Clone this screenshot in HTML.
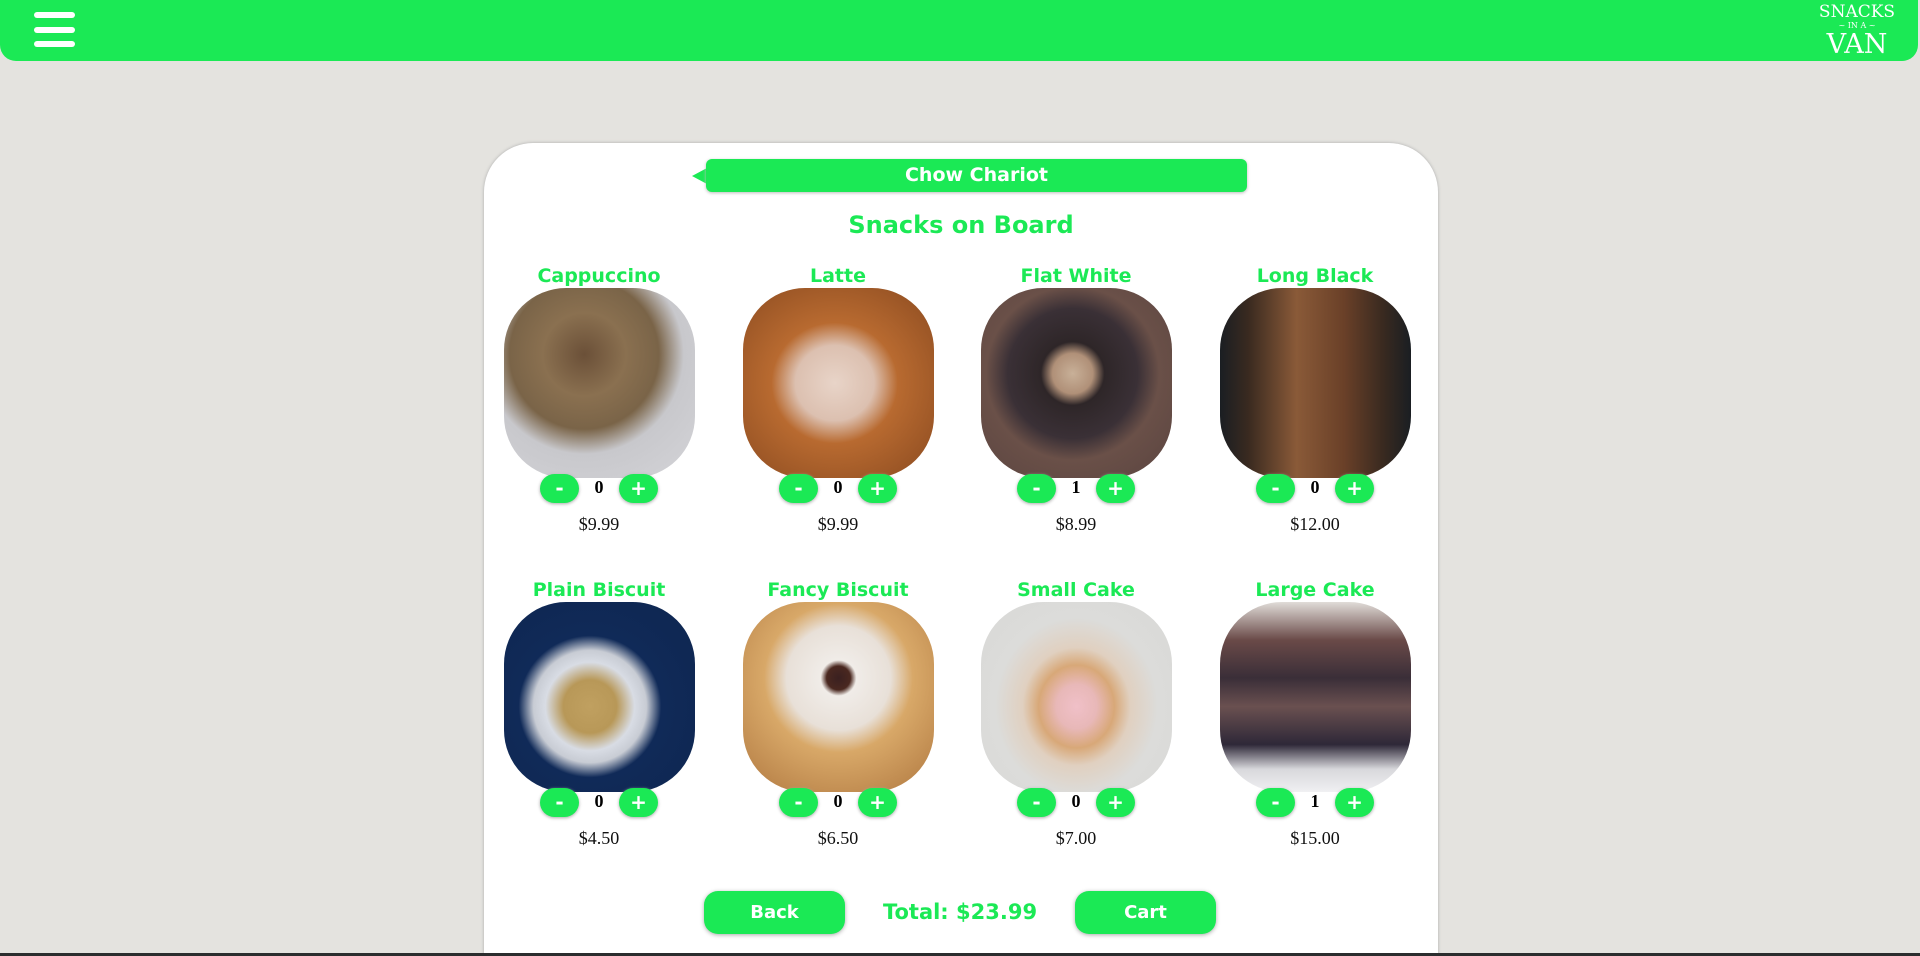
<!DOCTYPE html>
<html><head><meta charset="utf-8"><style>
*{margin:0;padding:0;box-sizing:border-box}
html{overflow:hidden;height:956px}
body{width:1920px;height:956px;background:#e4e3df;position:relative;overflow:hidden;font-family:"DejaVu Sans","Liberation Sans",sans-serif}
.hdr{position:absolute;left:0;top:0;width:1918px;height:61px;background:#1be955;border-radius:0 0 16px 16px}
.bar{position:absolute;left:34px;width:41px;height:6px;background:#fff;border-radius:3px}
.logo{position:absolute;left:1818px;top:4px;width:78px;color:#fff;text-align:center;font-family:"DejaVu Serif",serif;line-height:1}
.card{position:absolute;left:484px;top:143px;width:954px;height:813px;background:#fff;border-radius:49px 49px 0 0;box-shadow:0 0 3px #aaa}
.chow{position:absolute;left:706px;top:159px;width:541px;height:33px;background:#1be955;border-radius:6px;color:#fff;font-weight:bold;font-size:19px;text-align:center;line-height:33px;box-shadow:0 1px 3px #bbb}
.tri{position:absolute;left:692px;top:168px;width:0;height:0;border-top:8px solid transparent;border-bottom:8px solid transparent;border-right:15px solid #1be955}
.h{position:absolute;left:484px;width:954px;text-align:center;color:#1be955;font-weight:bold;font-size:24px;top:211px}
.item{position:absolute;width:240px;text-align:center}
.item .t{color:#1be955;font-weight:bold;font-size:19px;height:24px;line-height:24px}
.img{width:191px;height:190px;margin:0 auto;border-radius:62px}
.ctl{position:relative;height:30px;margin-top:-4px}
.b{position:absolute;top:0;width:39px;height:29px;background:#1be955;border-radius:15px;color:#fff;font-weight:bold;font-size:20px;line-height:28px;box-shadow:0 1px 3px #aaa}
.n{position:absolute;left:0;right:0;top:3px;font-family:"Liberation Serif",serif;font-weight:bold;font-size:18px}
.p{margin-top:10px;font-family:"Liberation Serif",serif;font-size:18px;color:#111}
.btn{position:absolute;top:891px;width:141px;height:43px;background:#1be955;border-radius:14px;color:#fff;font-weight:bold;font-size:18px;text-align:center;line-height:43px;box-shadow:0 1px 4px #aaa}
.tot{position:absolute;left:860px;width:200px;top:900px;text-align:center;color:#1be955;font-weight:bold;font-size:21px}
.foot{position:absolute;left:0;top:953px;width:1920px;height:3px;background:#2b2d2e}
</style></head><body>
<div class="hdr">
<div class="bar" style="top:12px"></div><div class="bar" style="top:27px"></div><div class="bar" style="top:41px"></div>
<div class="logo"><div style="font-size:17px">SNACKS</div><div style="font-size:8px;margin:1px 0">~ IN A ~</div><div style="font-size:27px">VAN</div></div>
</div>
<div class="card"></div>
<div class="tri"></div><div class="chow">Chow Chariot</div>
<div class="h">Snacks on Board</div>

<div class="item" style="left:479px;top:264px"><div class="t">Cappuccino</div><div class="img" style="background:radial-gradient(circle at 42% 35%,#6b5038 0,#8a7050 25%,#7a6448 45%,#c8c8cc 60%,#d4d4d8 100%)"></div><div class="ctl"><div class="b" style="left:61px">-</div><div class="n">0</div><div class="b" style="left:140px">+</div></div><div class="p">$9.99</div></div>
<div class="item" style="left:718px;top:264px"><div class="t">Latte</div><div class="img" style="background:radial-gradient(ellipse at 48% 50%,#e8d4c8 0,#dcc0b0 28%,#b86a30 45%,#8a4a20 100%)"></div><div class="ctl"><div class="b" style="left:61px">-</div><div class="n">0</div><div class="b" style="left:140px">+</div></div><div class="p">$9.99</div></div>
<div class="item" style="left:956px;top:264px"><div class="t">Flat White</div><div class="img" style="background:radial-gradient(circle at 48% 45%,#c8b098 0,#b09078 14%,#2e2628 22%,#3a3036 45%,#6a5048 60%,#5a4440 100%)"></div><div class="ctl"><div class="b" style="left:61px">-</div><div class="n">1</div><div class="b" style="left:140px">+</div></div><div class="p">$8.99</div></div>
<div class="item" style="left:1195px;top:264px"><div class="t">Long Black</div><div class="img" style="background:linear-gradient(90deg,#1a1e22 0,#3a2a20 15%,#8a5a38 40%,#6a4028 65%,#3a2a20 85%,#1a1e22 100%)"></div><div class="ctl"><div class="b" style="left:61px">-</div><div class="n">0</div><div class="b" style="left:140px">+</div></div><div class="p">$12.00</div></div>

<div class="item" style="left:479px;top:578px"><div class="t">Plain Biscuit</div><div class="img" style="background:radial-gradient(ellipse at 45% 55%,#c0a060 0,#b89858 18%,#d8dce4 30%,#c8ccd4 38%,#102a58 48%,#0e2650 100%)"></div><div class="ctl"><div class="b" style="left:61px">-</div><div class="n">0</div><div class="b" style="left:140px">+</div></div><div class="p">$4.50</div></div>
<div class="item" style="left:718px;top:578px"><div class="t">Fancy Biscuit</div><div class="img" style="background:radial-gradient(circle at 50% 40%,#3a2020 0,#4a2820 8%,#f0ece8 12%,#e8e0d8 35%,#d8a868 50%,#b07840 100%)"></div><div class="ctl"><div class="b" style="left:61px">-</div><div class="n">0</div><div class="b" style="left:140px">+</div></div><div class="p">$6.50</div></div>
<div class="item" style="left:956px;top:578px"><div class="t">Small Cake</div><div class="img" style="background:radial-gradient(ellipse at 50% 55%,#f0c0c8 0,#e8b8b8 15%,#d8a878 28%,#e0d0c0 40%,#dcdcda 60%,#d8d8d6 100%)"></div><div class="ctl"><div class="b" style="left:61px">-</div><div class="n">0</div><div class="b" style="left:140px">+</div></div><div class="p">$7.00</div></div>
<div class="item" style="left:1195px;top:578px"><div class="t">Large Cake</div><div class="img" style="background:linear-gradient(180deg,#e0dcd8 0,#6a4a48 20%,#3a2e38 40%,#6a5050 55%,#2e2838 75%,#d8d8dc 88%,#f0f0f2 100%)"></div><div class="ctl"><div class="b" style="left:61px">-</div><div class="n">1</div><div class="b" style="left:140px">+</div></div><div class="p">$15.00</div></div>

<div class="btn" style="left:704px">Back</div>
<div class="tot">Total: $23.99</div>
<div class="btn" style="left:1075px">Cart</div>
<div class="foot"></div>
</body></html>
